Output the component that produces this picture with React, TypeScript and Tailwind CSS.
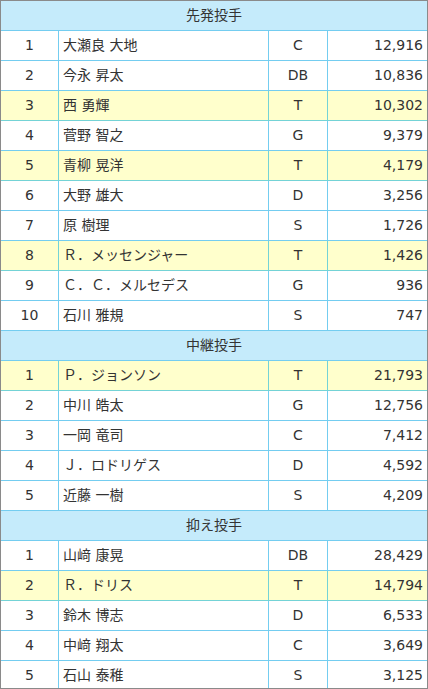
type Row = { no: number; name: string; team: string; votes: string; hl?: boolean };

const sections: { title: string; rows: Row[] }[] = [
  {
    title: "先発投手",
    rows: [
      { no: 1, name: "大瀬良 大地", team: "C", votes: "12,916" },
      { no: 2, name: "今永 昇太", team: "DB", votes: "10,836" },
      { no: 3, name: "西 勇輝", team: "T", votes: "10,302", hl: true },
      { no: 4, name: "菅野 智之", team: "G", votes: "9,379" },
      { no: 5, name: "青柳 晃洋", team: "T", votes: "4,179", hl: true },
      { no: 6, name: "大野 雄大", team: "D", votes: "3,256" },
      { no: 7, name: "原 樹理", team: "S", votes: "1,726" },
      { no: 8, name: "Ｒ．メッセンジャー", team: "T", votes: "1,426", hl: true },
      { no: 9, name: "Ｃ．Ｃ．メルセデス", team: "G", votes: "936" },
      { no: 10, name: "石川 雅規", team: "S", votes: "747" },
    ],
  },
  {
    title: "中継投手",
    rows: [
      { no: 1, name: "Ｐ．ジョンソン", team: "T", votes: "21,793", hl: true },
      { no: 2, name: "中川 皓太", team: "G", votes: "12,756" },
      { no: 3, name: "一岡 竜司", team: "C", votes: "7,412" },
      { no: 4, name: "Ｊ．ロドリゲス", team: "D", votes: "4,592" },
      { no: 5, name: "近藤 一樹", team: "S", votes: "4,209" },
    ],
  },
  {
    title: "抑え投手",
    rows: [
      { no: 1, name: "山﨑 康晃", team: "DB", votes: "28,429" },
      { no: 2, name: "Ｒ．ドリス", team: "T", votes: "14,794", hl: true },
      { no: 3, name: "鈴木 博志", team: "D", votes: "6,533" },
      { no: 4, name: "中﨑 翔太", team: "C", votes: "3,649" },
      { no: 5, name: "石山 泰稚", team: "S", votes: "3,125" },
    ],
  },
];

const DataRow = ({ row }: { row: Row }) => {
  const line = row.hl ? "border-[#74d3d6]" : "border-[#74cdf0]";
  return (
    <div
      className={`grid grid-cols-[58px_210px_59px_99px] h-[30px] border-b ${line} ${
        row.hl ? "bg-[#ffffcc]" : "bg-white"
      }`}
    >
      <div className={`flex items-center justify-center border-r ${line}`}>{row.no}</div>
      <div className={`flex items-center pl-[4px] border-r ${line}`}>{row.name}</div>
      <div className={`flex items-center justify-center border-r ${line}`}>{row.team}</div>
      <div className="flex items-center justify-end pr-[4px]">{row.votes}</div>
    </div>
  );
};

export default function App() {
  return (
    <div
      className="w-[428px] h-[689px] overflow-hidden border border-[#8a8a8a] text-[14px] text-[#333333] bg-white"
      style={{ fontFamily: '"DejaVu Sans", "Noto Sans CJK JP", sans-serif' }}
    >
      {sections.map((s) => (
        <div key={s.title}>
          <div className="h-[30px] flex items-center justify-center bg-[#c5ebfb] border-b border-[#74cdf0]">
            {s.title}
          </div>
          {s.rows.map((r) => (
            <DataRow key={s.title + r.no} row={r} />
          ))}
        </div>
      ))}
    </div>
  );
}
